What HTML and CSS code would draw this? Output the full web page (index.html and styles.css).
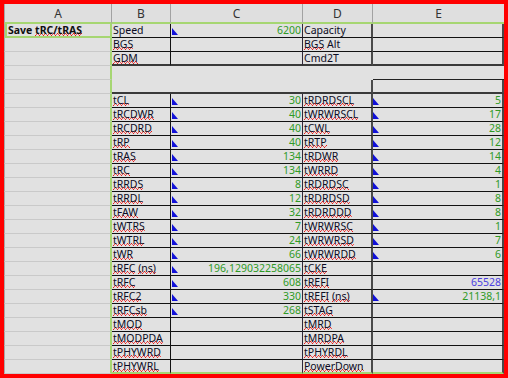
FILE: index.html
```html
<!DOCTYPE html>
<html>
<head>
<meta charset="utf-8">
<link rel="stylesheet" href="styles.css">
</head>
<body>
<div class="frame">
<table class="sheet">
<colgroup><col class="ca"><col class="cb"><col class="cc"><col class="cd"><col class="ce"></colgroup>
<thead>
<tr class="hdr"><th class="ha">A</th><th>B</th><th>C</th><th>D</th><th class="he">E</th></tr>
</thead>
<tbody>
<tr class="top"><td class="a a1"><b>Save <span class="sp">tRC/tRAS</span></b></td><td class="b">Speed</td><td class="c"><div class="num"><i class="tri"></i><span>6200</span></div></td><td class="d">Capacity</td><td class="e"></td></tr>
<tr class="top"><td class="a"></td><td class="b"><span class="sp">BGS</span></td><td class="c"></td><td class="d"><span class="sp">BGS</span> Alt</td><td class="e"></td></tr>
<tr class="top last"><td class="a"></td><td class="b"><span class="sp">GDM</span></td><td class="c"></td><td class="d">Cmd2T</td><td class="e"></td></tr>
<tr class="gap1"><td class="a"></td><td></td><td></td><td></td><td class="e"></td></tr>
<tr class="gap2"><td class="a"></td><td></td><td></td><td class="d"></td><td class="e"></td></tr>
<tr class="row"><td class="a"></td><td class="b"><span class="sp">tCL</span></td><td class="c"><div class="num"><i class="tri"></i><span>30</span></div></td><td class="d"><span class="sp">tRDRDSCL</span></td><td class="e"><div class="num"><i class="tri"></i><span>5</span></div></td></tr>
<tr class="row"><td class="a"></td><td class="b"><span class="sp">tRCDWR</span></td><td class="c"><div class="num"><i class="tri"></i><span>40</span></div></td><td class="d"><span class="sp">tWRWRSCL</span></td><td class="e"><div class="num"><i class="tri"></i><span>17</span></div></td></tr>
<tr class="row"><td class="a"></td><td class="b"><span class="sp">tRCDRD</span></td><td class="c"><div class="num"><i class="tri"></i><span>40</span></div></td><td class="d"><span class="sp">tCWL</span></td><td class="e"><div class="num"><i class="tri"></i><span>28</span></div></td></tr>
<tr class="row"><td class="a"></td><td class="b"><span class="sp">tRP</span></td><td class="c"><div class="num"><i class="tri"></i><span>40</span></div></td><td class="d"><span class="sp">tRTP</span></td><td class="e"><div class="num"><i class="tri"></i><span>12</span></div></td></tr>
<tr class="row"><td class="a"></td><td class="b"><span class="sp">tRAS</span></td><td class="c"><div class="num"><i class="tri"></i><span>134</span></div></td><td class="d"><span class="sp">tRDWR</span></td><td class="e"><div class="num"><i class="tri"></i><span>14</span></div></td></tr>
<tr class="row"><td class="a"></td><td class="b"><span class="sp">tRC</span></td><td class="c"><div class="num"><i class="tri"></i><span>134</span></div></td><td class="d"><span class="sp">tWRRD</span></td><td class="e"><div class="num"><i class="tri"></i><span>4</span></div></td></tr>
<tr class="row"><td class="a"></td><td class="b"><span class="sp">tRRDS</span></td><td class="c"><div class="num"><i class="tri"></i><span>8</span></div></td><td class="d"><span class="sp">tRDRDSC</span></td><td class="e"><div class="num"><i class="tri"></i><span>1</span></div></td></tr>
<tr class="row"><td class="a"></td><td class="b"><span class="sp">tRRDL</span></td><td class="c"><div class="num"><i class="tri"></i><span>12</span></div></td><td class="d"><span class="sp">tRDRDSD</span></td><td class="e"><div class="num"><i class="tri"></i><span>8</span></div></td></tr>
<tr class="row"><td class="a"></td><td class="b"><span class="sp">tFAW</span></td><td class="c"><div class="num"><i class="tri"></i><span>32</span></div></td><td class="d"><span class="sp">tRDRDDD</span></td><td class="e"><div class="num"><i class="tri"></i><span>8</span></div></td></tr>
<tr class="row"><td class="a"></td><td class="b"><span class="sp">tWTRS</span></td><td class="c"><div class="num"><i class="tri"></i><span>7</span></div></td><td class="d"><span class="sp">tWRWRSC</span></td><td class="e"><div class="num"><i class="tri"></i><span>1</span></div></td></tr>
<tr class="row"><td class="a"></td><td class="b"><span class="sp">tWTRL</span></td><td class="c"><div class="num"><i class="tri"></i><span>24</span></div></td><td class="d"><span class="sp">tWRWRSD</span></td><td class="e"><div class="num"><i class="tri"></i><span>7</span></div></td></tr>
<tr class="row"><td class="a"></td><td class="b"><span class="sp">tWR</span></td><td class="c"><div class="num"><i class="tri"></i><span>66</span></div></td><td class="d"><span class="sp">tWRWRDD</span></td><td class="e"><div class="num"><i class="tri"></i><span>6</span></div></td></tr>
<tr class="row"><td class="a"></td><td class="b"><span class="sp">tRFC</span> <span class="sp">(ns)</span></td><td class="c"><div class="num"><i class="tri"></i><span>196,129032258065</span></div></td><td class="d"><span class="sp">tCKE</span></td><td class="e"></td></tr>
<tr class="row"><td class="a"></td><td class="b"><span class="sp">tRFC</span></td><td class="c"><div class="num"><i class="tri"></i><span>608</span></div></td><td class="d"><span class="sp">tREFI</span></td><td class="e"><div class="num"><i class="notri"></i><span class="blue">65528</span></div></td></tr>
<tr class="row"><td class="a"></td><td class="b"><span class="sp">tRFC2</span></td><td class="c"><div class="num"><i class="tri"></i><span>330</span></div></td><td class="d"><span class="sp">tREFI</span> <span class="sp">(ns)</span></td><td class="e"><div class="num"><i class="tri"></i><span>21138,1</span></div></td></tr>
<tr class="row"><td class="a"></td><td class="b"><span class="sp">tRFCsb</span></td><td class="c"><div class="num"><i class="tri"></i><span>268</span></div></td><td class="d"><span class="sp">tSTAG</span></td><td class="e"></td></tr>
<tr class="row"><td class="a"></td><td class="b"><span class="sp">tMOD</span></td><td class="c"></td><td class="d"><span class="sp">tMRD</span></td><td class="e"></td></tr>
<tr class="row"><td class="a"></td><td class="b"><span class="sp">tMODPDA</span></td><td class="c"></td><td class="d"><span class="sp">tMRDPA</span></td><td class="e"></td></tr>
<tr class="row"><td class="a"></td><td class="b"><span class="sp">tPHYWRD</span></td><td class="c"></td><td class="d"><span class="sp">tPHYRDL</span></td><td class="e"></td></tr>
<tr class="row end"><td class="a"></td><td class="b"><span class="sp">tPHYWRL</span></td><td class="c"></td><td class="d"><span class="sp">PowerDown</span></td><td class="e"></td></tr>
</tbody>
</table>
</div>
</body>
</html>
```
FILE: styles.css
```css
html, body {
  margin: 0;
  padding: 0;
  background: #ff0000;
}
.frame {
  padding: 4px 4px 4px 4px;
  width: 500px;
  height: 370px;
  overflow: hidden;
}
.sheet {
  table-layout: fixed;
  border-collapse: separate;
  border-spacing: 0;
  width: 500px;
  font-family: "Noto Sans", "DejaVu Sans", sans-serif;
  font-size: 10.5px;
  color: #0c0c24;
  background: #e1e1e1;
}
.ca { width: 108px; }
.cb { width: 59px; }
.cc { width: 132px; }
.cd { width: 70px; }
.ce { width: 131px; }

.sheet th, .sheet td {
  box-sizing: border-box;
  padding: 0;
  white-space: nowrap;
}
.hdr th {
  height: 20px;
  line-height: 17px;
  padding-top: 1px;
  font-weight: normal;
  font-size: 12px;
  color: #333;
  background: #dfdfdf;
  text-align: center;
  vertical-align: top;
  border-right: 1px solid #a2a2a2;
  border-bottom: 2px solid #a6d672;
}
.hdr .ha { border-left: 1px solid #a8a8a8; }
.hdr .he { border-right: none; }

.sheet tbody tr { height: 14px; }
.sheet td {
  height: 14px;
  line-height: 12px;
  vertical-align: top;
}
td.a {
  border-left: 1px solid #a8a8a8;
  border-right: 2px solid #a6d672;
  border-bottom: 1px solid #c9c9c9;
  padding-left: 1px;
}
td.a1 {
  box-shadow: inset 2px 0 0 #a6d672, inset 0 -1px 0 #a6d672;
  border-bottom: 1px solid #a6d672;
  padding-left: 3px;
  color: #101010;
}
td.b { padding-left: 1px; }
td.c { overflow: hidden; }
td.d { padding-left: 1px; }

/* top block rows */
tr.top td.b { border-right: 1px solid #111; border-bottom: 1px solid #111; }
tr.top td.c { border-right: 1px solid #302838; border-bottom: 1px solid #111; }
tr.top td.d { border-right: 2px solid #4a4a4a; border-bottom: 1px solid #111; }
tr.top td.e { border-right: 2px solid #4a4a4a; border-bottom: 1px solid #111; }
tr.top.last td.b, tr.top.last td.c, tr.top.last td.d, tr.top.last td.e { border-bottom: 2px solid #3a3a3a; }

/* gap rows */
tr.gap1 td.e { border-bottom: 1px solid #222; }
tr.gap2 td:not(.a) { border-bottom: 2px solid #3a3a3a; }
tr.gap2 td.d { border-right: 2px solid #4a4a4a; }
tr.gap2 td.e { border-right: 2px solid #4a4a4a; }

/* main rows */
tr.row td.b { border-right: 1px solid #111; border-bottom: 1px solid #111; }
tr.row td.c { border-right: 1px solid #302838; border-bottom: 1px solid #111; }
tr.row td.d { border-right: 2px solid #4a4a4a; border-bottom: 1px solid #111; }
tr.row td.e { border-right: 2px solid #4a4a4a; border-bottom: 1px solid #111; }
tr.row.end td.b, tr.row.end td.c, tr.row.end td.d, tr.row.end td.e { border-bottom: 2px solid #a6d672; }

/* spell-check squiggle: 4px-period pixel wave */
.sp {
  background-image:
    linear-gradient(to right, transparent 2px, #e81818 2px, #e81818 3px, transparent 3px),
    linear-gradient(to right, transparent 1px, #f05050 1px, #f05050 2px, transparent 2px, transparent 3px, #f05050 3px),
    linear-gradient(to right, #e81818 1px, transparent 1px);
  background-size: 4px 1px, 4px 1px, 4px 1px;
  background-repeat: repeat-x;
  background-position: 0 calc(100% - 3px), 0 calc(100% - 2px), 0 calc(100% - 1px);
}

.num {
  display: flex;
  justify-content: space-between;
  align-items: flex-start;
  color: #2f9a26;
  padding-right: 1px;
}
.tri {
  display: block;
  width: 0;
  height: 0;
  margin-top: 4px;
  margin-left: 1px;
  border-left: 6px solid #1010d8;
  border-top: 7px solid transparent;
}
td.e .tri { margin-left: 0; }
.notri { display: block; }
.blue { color: #4a3ee0; }
```
